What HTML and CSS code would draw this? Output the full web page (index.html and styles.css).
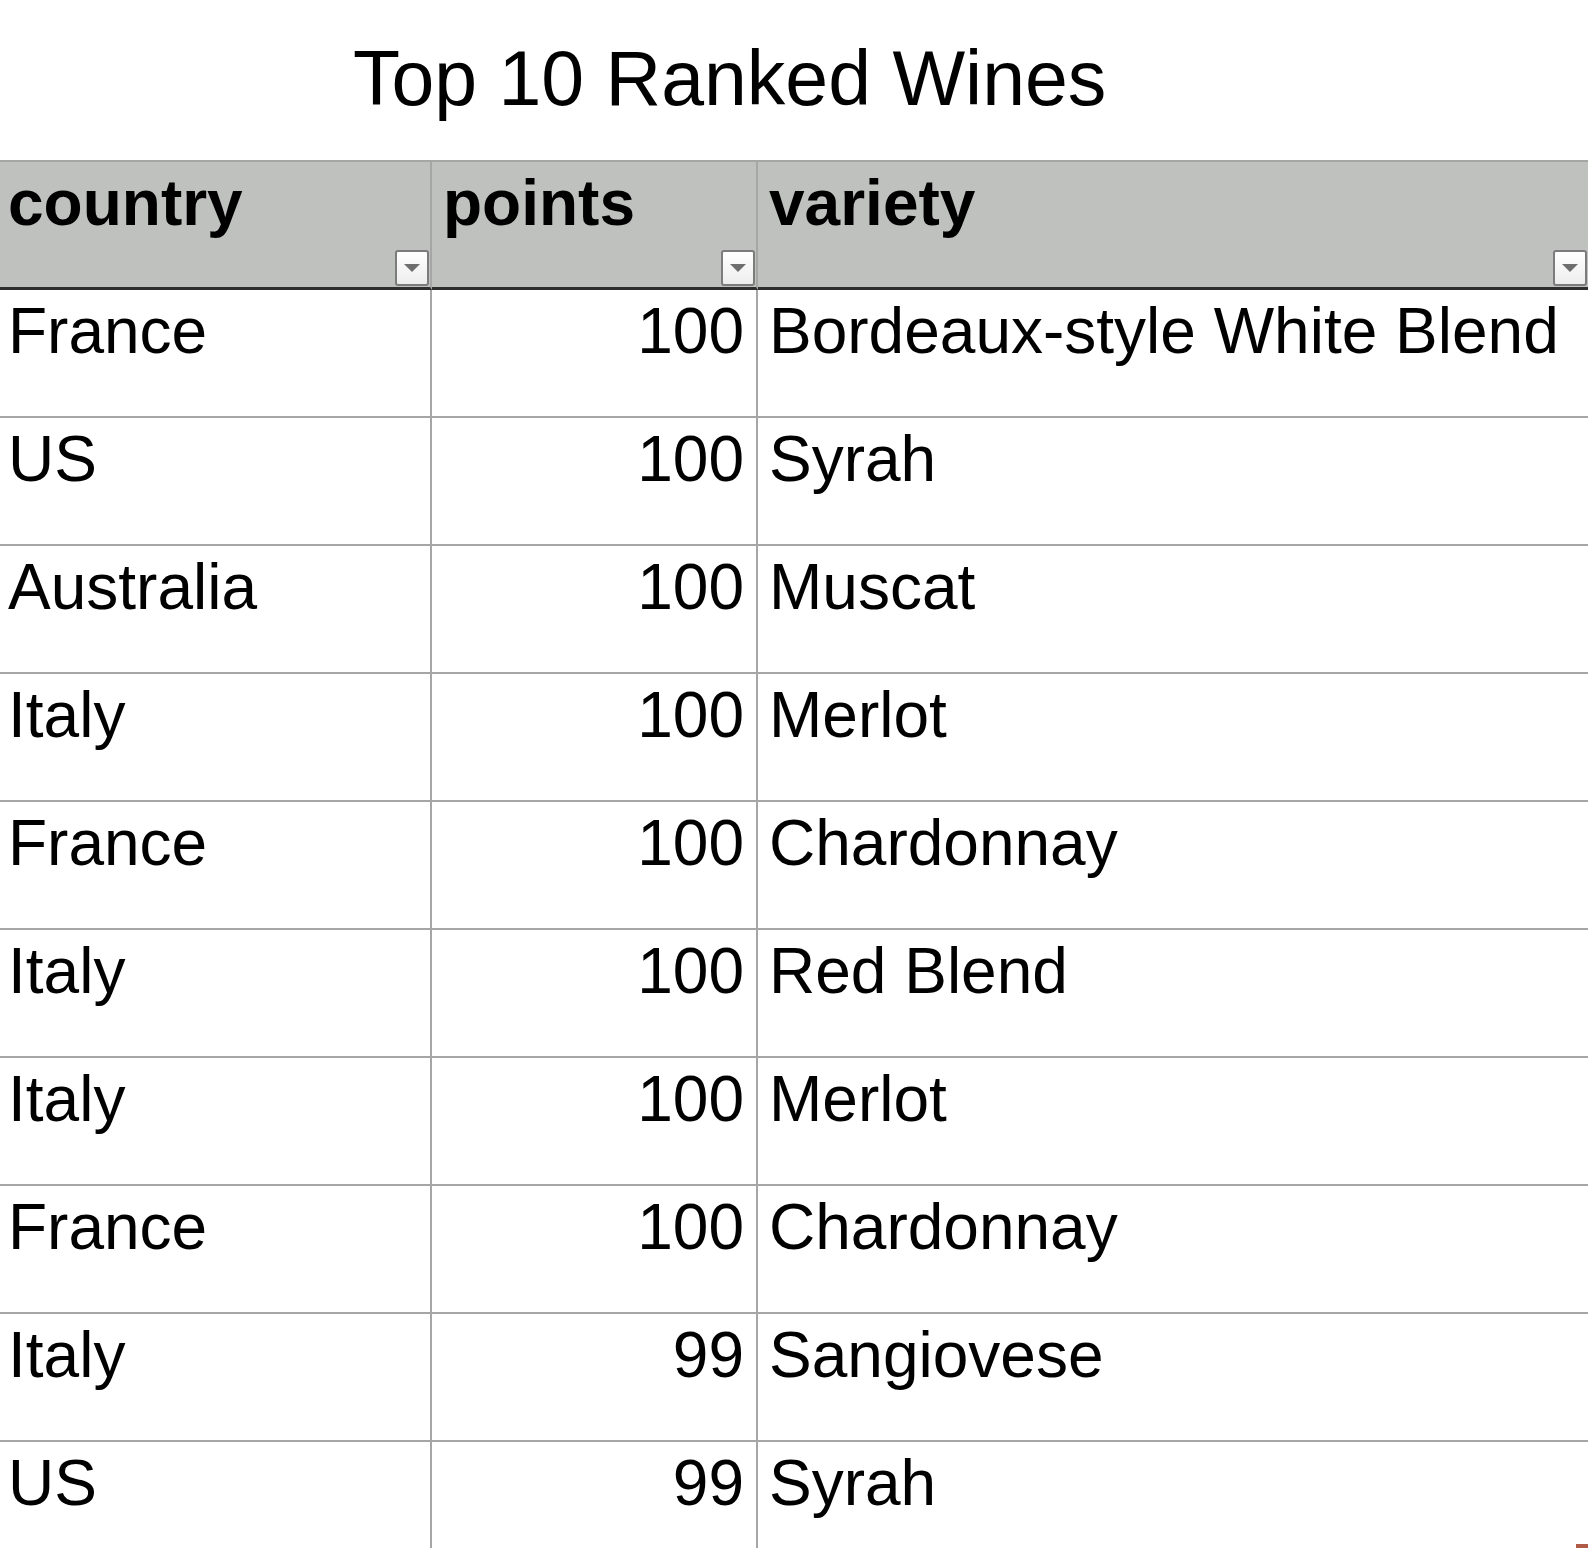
FILE: index.html
```html
<!DOCTYPE html>
<html>
<head>
<meta charset="utf-8">
<link rel="stylesheet" href="styles.css">
</head>
<body>
<div class="page">
  <h1 class="title">Top 10 Ranked Wines</h1>
  <div class="table">
    <div class="cell head c1">country<span class="dd"></span></div>
    <div class="cell head c2">points<span class="dd"></span></div>
    <div class="cell head c3">variety<span class="dd"></span></div>

    <div class="cell c1">France</div><div class="cell c2">100</div><div class="cell c3">Bordeaux-style White Blend</div>
    <div class="cell c1">US</div><div class="cell c2">100</div><div class="cell c3">Syrah</div>
    <div class="cell c1">Australia</div><div class="cell c2">100</div><div class="cell c3">Muscat</div>
    <div class="cell c1">Italy</div><div class="cell c2">100</div><div class="cell c3">Merlot</div>
    <div class="cell c1">France</div><div class="cell c2">100</div><div class="cell c3">Chardonnay</div>
    <div class="cell c1">Italy</div><div class="cell c2">100</div><div class="cell c3">Red Blend</div>
    <div class="cell c1">Italy</div><div class="cell c2">100</div><div class="cell c3">Merlot</div>
    <div class="cell c1">France</div><div class="cell c2">100</div><div class="cell c3">Chardonnay</div>
    <div class="cell c1">Italy</div><div class="cell c2">99</div><div class="cell c3">Sangiovese</div>
    <div class="cell c1">US</div><div class="cell c2">99</div><div class="cell c3">Syrah</div>
  </div>
  <div class="handle"></div>
</div>
</body>
</html>
```

FILE: styles.css
```css
html, body {
  margin: 0;
  padding: 0;
  background: #ffffff;
}
.page {
  position: relative;
  width: 1588px;
  height: 1548px;
  overflow: hidden;
  font-family: "Liberation Sans", Arial, Helvetica, sans-serif;
  color: #000;
}
.title {
  margin: 0;
  height: 77px;
  padding: 40px 0 43px 353px;
  font-size: 77px;
  line-height: 77px;
  font-weight: normal;
}
.table {
  display: grid;
  grid-template-columns: 432px 326px 830px;
}
.cell {
  position: relative;
  box-sizing: content-box;
  padding-top: 9px;
  height: 117px;
  border-bottom: 2px solid #a6a6a6;
  font-size: 64px;
  line-height: 64px;
  white-space: nowrap;
}
.c1, .c2 {
  border-right: 2px solid #a6a6a6;
}
.c1 { padding-left: 8px; }
.c2 { text-align: right; padding-right: 12px; }
.c3 { padding-left: 11px; }
.head {
  background: #bfc1bf;
  font-weight: bold;
  border-top: 2px solid #a6a6a6;
  border-bottom: 3px solid #2e2e2e;
  height: 116px;
}
.head.c2 { text-align: left; padding-left: 11px; padding-right: 0; }
.head.c3 { padding-left: 11px; }
.dd {
  position: absolute;
  right: 1px;
  bottom: 1px;
  width: 30px;
  height: 32px;
  border: 2px solid #7c7c7c;
  border-radius: 3px;
  background: linear-gradient(#ffffff, #ededed);
}
.dd::after {
  content: "";
  position: absolute;
  left: 7px;
  top: 12px;
  border-left: 8px solid transparent;
  border-right: 8px solid transparent;
  border-top: 8px solid #6e6e6e;
}
.handle {
  position: absolute;
  right: 0;
  bottom: 0;
  width: 12px;
  height: 4px;
  background: #b05a48;
}
```
